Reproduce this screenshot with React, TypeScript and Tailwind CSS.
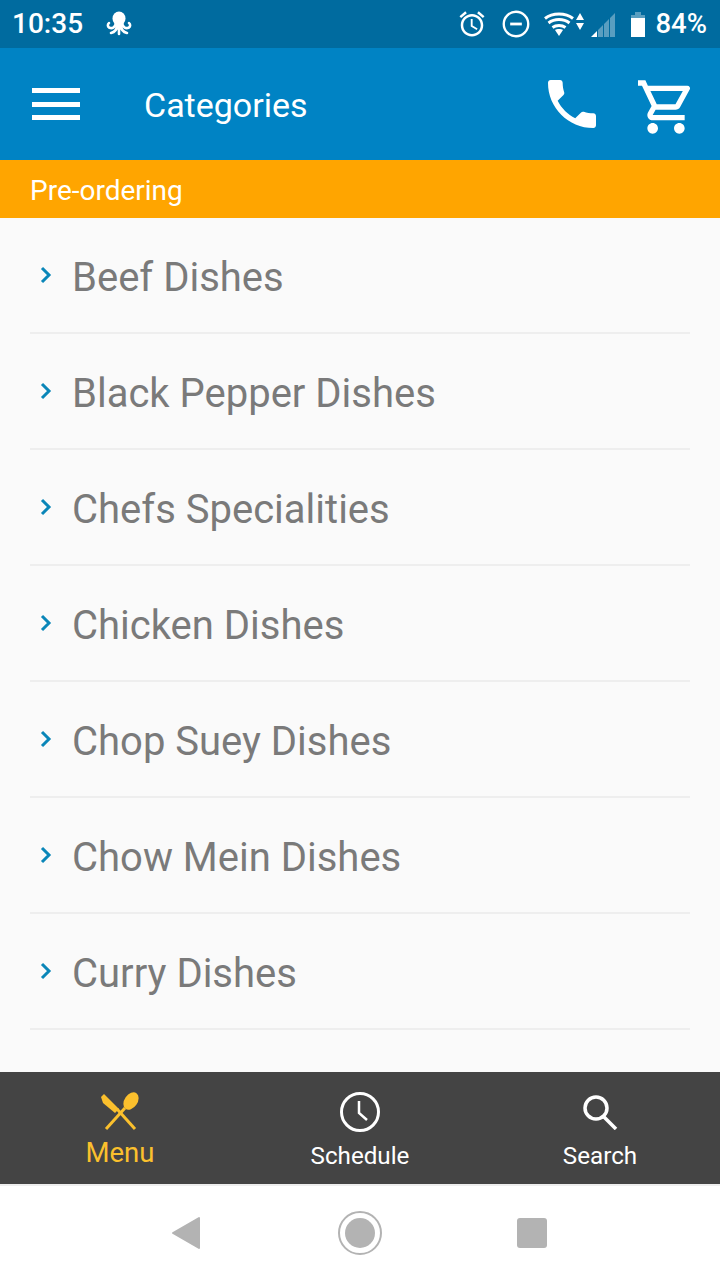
import type { ReactNode } from "react";

const categories = [
  "Beef Dishes",
  "Black Pepper Dishes",
  "Chefs Specialities",
  "Chicken Dishes",
  "Chop Suey Dishes",
  "Chow Mein Dishes",
  "Curry Dishes",
];

function StatusIcons() {
  return (
    <div className="flex items-center">
      <svg width="30" height="30" viewBox="0 0 24 24" fill="white" className="mr-[15px]">
        <path d="M22 5.72l-4.6-3.86-1.29 1.53 4.6 3.86L22 5.72zM7.88 3.39L6.6 1.86 2 5.71l1.29 1.53 4.59-3.85zM12.5 8H11v6l4.75 2.85.75-1.23-4-2.37V8zM12 4c-4.97 0-9 4.03-9 9s4.03 9 9 9 9-4.03 9-9-4.03-9-9-9zm0 16c-3.87 0-7-3.13-7-7s3.13-7 7-7 7 3.13 7 7-3.13 7-7 7z" />
      </svg>
      <svg width="28" height="28" viewBox="0 0 24 24" fill="none" stroke="white" strokeWidth="2" className="mr-[14px]">
        <circle cx="12" cy="12" r="10.500" />
        <path d="M7 12h10" strokeWidth="2.400" />
      </svg>
      <svg width="30" height="24" viewBox="0 0 30 24" fill="none" stroke="white" strokeWidth="3">
        <path d="M1 6.500C8.500 .5 21.500 .5 29 6.500" />
        <path d="M4.500 11c6-4.600 15-4.600 21 0" />
        <path d="M8.500 15.500c3.600-2.600 9.400-2.600 13 0" />
        <path d="M11 18l4 6 4-6c-2-1.400-6-1.400-8 0z" fill="white" stroke="none" />
      </svg>
      <svg width="8" height="17" viewBox="0 0 8 17" fill="white" className="ml-[2px] mr-[7px] mb-[6px]">
        <path d="M4 0l4 7H0zM4 17l-4-7h8z" />
      </svg>
      <svg width="24" height="24" viewBox="0 0 24 24" className="mr-[16px] mt-[2px]">
        <path d="M0 24l6-6v6z" fill="white" />
        <path d="M7 24v-7l5-5v12zM13 24V11l5-5v18zM19 24V5l5-5v24z" fill="white" fillOpacity="0.35" />
      </svg>
      <svg width="14" height="25" viewBox="0 0 14 25" className="mr-[10px]">
        <path d="M4 0h6v3h4v22H0V3h4z" fill="white" fillOpacity="0.35" />
        <path d="M0 6h14v19H0z" fill="white" />
      </svg>
      <span className="text-[27.500px] font-medium leading-none text-white">84%</span>
    </div>
  );
}

function TabItem({ label, active, children, labelClass }: { label: string; active?: boolean; children: ReactNode; labelClass: string }) {
  return (
    <div className={`flex flex-1 flex-col items-center ${active ? "text-[#fbc02d]" : "text-white"}`}>
      <div className="flex h-[48px] items-center">{children}</div>
      <span className={labelClass}>{label}</span>
    </div>
  );
}

export default function App() {
  return (
    <div className="flex h-[1280px] w-[720px] flex-col overflow-hidden bg-white font-['Roboto',sans-serif]">
      <div className="flex h-[48px] shrink-0 items-center justify-between bg-[#006b9f] pl-[12px] pr-[13px]">
        <div className="flex items-center">
          <span className="text-[28px] font-medium leading-none text-white">10:35</span>
          <svg width="26" height="26" viewBox="0 0 26 26" className="ml-[23px]">
            <ellipse cx="13" cy="7.500" rx="6.500" ry="7" fill="white" />
            <path d="M10 12C9 17 6 18 3 16.500 1.500 15.500 1.500 13 3 12M11.500 14C11 19 9 21 5 22M13 14v9M14.500 14c.5 5 2.500 7 6.500 8M16 12c1 5 4 6 7 4.500 1.500-1 1.500-3.500 0-4.500" fill="none" stroke="white" strokeWidth="2.600" strokeLinecap="round" />
          </svg>
        </div>
        <StatusIcons />
      </div>

      <div className="flex h-[112px] shrink-0 items-center bg-[#0083c4] pl-[32px] pr-[26px]">
        <div className="flex h-[32px] w-[48px] flex-col justify-between">
          <div className="h-[5px] bg-white" />
          <div className="h-[5px] bg-white" />
          <div className="h-[5px] bg-white" />
        </div>
        <span className="ml-[64px] flex-1 pt-[2px] text-[34px] leading-none text-white">Categories</span>
        <svg width="48" height="48" viewBox="3 3 18 18" fill="white" className="mr-[42px] mb-[1px]">
          <path d="M6.620 10.790c1.440 2.830 3.760 5.140 6.590 6.590l2.200-2.200c.270-.270.670-.360 1.020-.240 1.120.370 2.330.570 3.570.570.550 0 1 .450 1 1V20c0 .550-.450 1-1 1C10.610 21 3 13.390 3 4c0-.550.450-1 1-1h3.500c.550 0 1 .450 1 1 0 1.250.200 2.450.570 3.570.110.350.030.740-.250 1.020l-2.200 2.200z" />
        </svg>
        <svg width="56" height="56" viewBox="1.500 1.500 21 21" fill="white" className="mt-[5px]">
          <path d="M15.550 13c.750 0 1.410-.410 1.750-1.030l3.580-6.490A.996.996 0 0 0 20.010 4H5.210l-.940-2H1v2h2l3.600 7.590-1.350 2.440C4.520 15.370 5.480 17 7 17h12v-2H7l1.100-2h7.450zM6.160 6h12.150l-2.760 5H8.530L6.160 6zM7 18c-1.100 0-1.990.900-1.990 2S5.900 22 7 22s2-.900 2-2-.900-2-2-2zm10 0c-1.100 0-1.990.900-1.990 2s.890 2 1.990 2 2-.900 2-2-.900-2-2-2z" />
        </svg>
      </div>

      <div className="flex h-[58px] shrink-0 items-center bg-[#ffa500] pl-[30px] pt-[4px] text-[28px] text-white">Pre-ordering</div>

      <div className="min-h-0 flex-1 bg-[#fafafa] px-[30px]">
        {categories.map((name) => (
          <div key={name} className="flex h-[116px] items-center border-b-2 border-[#eeeeee]">
            <svg width="12" height="18" viewBox="0 0 12 18" fill="none" stroke="#0a86b8" strokeWidth="3" className="ml-[10px] mb-[1px]">
              <path d="M2 2l7 7-7 7" />
            </svg>
            <span className="ml-[20px] pt-[5px] text-[40px] leading-none text-[#7a7a7a]">{name}</span>
          </div>
        ))}
      </div>

      <div className="flex h-[112px] shrink-0 bg-[#444444] pt-[16px]">
        <TabItem label="Menu" active labelClass="mt-[1px] text-[27.500px] leading-[32px]">
          <svg width="40" height="40" viewBox="0 0 40 40" fill="#fbc02d" className="mb-[1px]">
            <path d="M1 5l3-3 15 15-4 4L3 11z" />
            <path d="M17 17l18 20" stroke="#fbc02d" strokeWidth="3" />
            <path d="M25 16L6 37" stroke="#fbc02d" strokeWidth="3" />
            <ellipse cx="31" cy="9" rx="6.500" ry="9.500" transform="rotate(35 31 9)" />
          </svg>
        </TabItem>
        <TabItem label="Schedule" labelClass="mt-[4px] text-[24.200px] leading-[32px]">
          <svg width="40" height="40" viewBox="0 0 40 40" fill="none" stroke="white">
            <circle cx="20" cy="20" r="18.500" strokeWidth="3" />
            <path d="M19 9v12l8 7" strokeWidth="2.500" />
          </svg>
        </TabItem>
        <TabItem label="Search" labelClass="mt-[4px] text-[24.200px] leading-[32px]">
          <svg width="36" height="36" viewBox="0 0 36 36" fill="none" stroke="white" strokeWidth="3.500">
            <circle cx="14" cy="14" r="11" />
            <path d="M21 22l13 13" />
          </svg>
        </TabItem>
      </div>

      <div className="h-[2px] shrink-0 bg-[#eeeeee]" />
      <div className="flex h-[94px] shrink-0 items-center justify-center bg-white pr-[2px]">
        <svg width="30" height="34" viewBox="0 0 30 34" className="mr-[137px]">
          <path d="M28 2v30L2 17z" fill="#b3b3b3" stroke="#b3b3b3" strokeWidth="2" strokeLinejoin="round" />
        </svg>
        <svg width="44" height="44" viewBox="0 0 44 44" className="mr-[135px] mb-[1px]">
          <circle cx="22" cy="22" r="21" fill="none" stroke="#b3b3b3" strokeWidth="2" />
          <circle cx="22" cy="22" r="15" fill="#b3b3b3" />
        </svg>
        <div className="h-[30px] w-[30px] rounded-[3px] bg-[#b3b3b3]" />
      </div>
    </div>
  );
}
